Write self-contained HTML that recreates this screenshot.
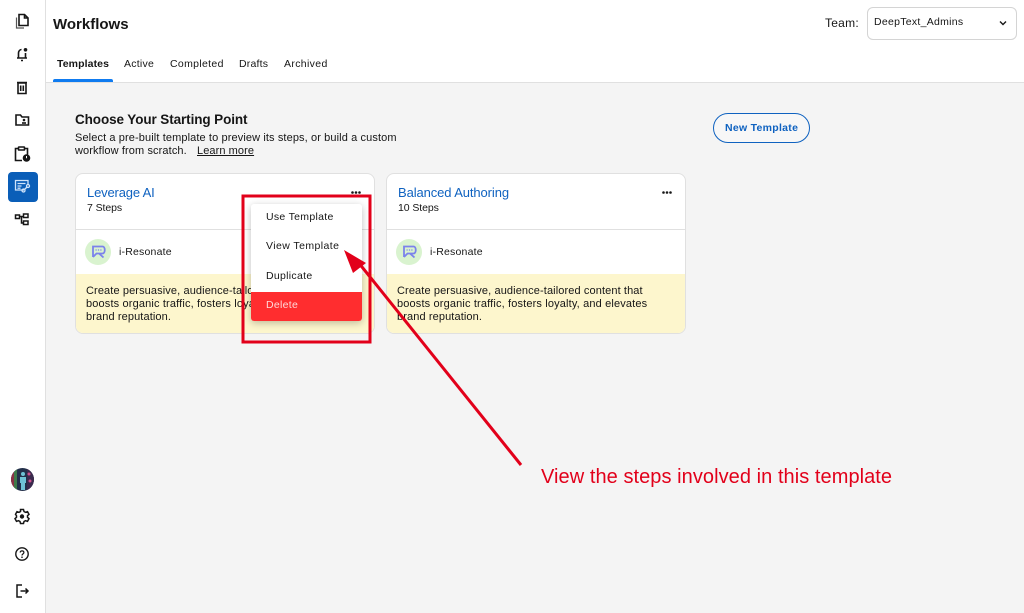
<!DOCTYPE html>
<html lang="en"><head><meta charset="utf-8"><title>Workflows</title>
<style>
html,body{margin:0;padding:0}
body{width:1024px;height:613px;position:relative;overflow:hidden;background:#f4f4f4;font-family:"Liberation Sans",sans-serif;color:#161616}
.a{position:absolute;white-space:nowrap}
.t{font-size:11px;line-height:13px;letter-spacing:.11px}
.ic{position:absolute;left:12px;width:20px;height:20px;fill:none;stroke:#161616;stroke-width:1.6}
.card{position:absolute;top:173px;width:298px;height:159px;background:#fff;border:1px solid #e0e0e0;border-radius:8px;overflow:hidden}
.card .ttl{left:11px;top:11px;font-size:13px;line-height:15px;color:#0f62c0;letter-spacing:-.1px}
.card .st{left:11px;top:27.500px;font-size:10.5px;line-height:12px;letter-spacing:-.08px}
.card .dv{position:absolute;left:0;right:0;top:55px;height:1px;background:#e0e0e0}
.card .y{position:absolute;left:0;right:0;top:100px;height:60px;background:#fdf6cd}
.card .d{left:10px;top:111px;font-size:11px;line-height:13px;letter-spacing:.11px;color:#161616}
.card .d span{letter-spacing:.15px}
.card .name{left:43px;top:72px;font-size:10.5px;line-height:13px;letter-spacing:.2px}
.card .av{position:absolute;left:9px;top:65px;width:26px;height:26px}
.dots{position:absolute;top:191px;width:10px;height:3px}
.m{left:15px;font-size:10.5px;line-height:13px;letter-spacing:.3px}
</style></head><body>

<div class="a" style="left:0;top:0;width:45px;height:613px;background:#fff;border-right:1px solid #e0e0e0"></div>
<div class="a" style="left:46px;top:0;width:978px;height:82px;background:#fff;border-bottom:1px solid #e0e0e0"></div>

<svg class="ic" style="top:11px" viewBox="0 0 20 20"><path d="M7 3.500h5.500L16 7v7.500H7z"/><path d="M12.500 3.500V7H16"/><path d="M4.500 6.500v10.500H12" stroke="#555" stroke-width="1.200"/></svg>
<svg class="ic" style="top:44px" viewBox="0 0 20 20"><path d="M5 14h10M6.500 14V9c0-2 1.500-3.500 3-3.500M13.500 9v5M9 16.500h2"/><circle cx="13.500" cy="5.800" r="1.800" fill="#161616" stroke="none"/></svg>
<svg class="ic" style="top:78px" viewBox="0 0 20 20"><path d="M6 5h8v10.500H6zM5 4.500h10"/><path d="M8.700 7.500v5.500M11.300 7.500v5.500"/></svg>
<svg class="ic" style="top:110px" viewBox="0 0 20 20"><path d="M4 5h4.500l1.500 2h6.500v8H4z"/><circle cx="12" cy="10" r="1.300" fill="#161616" stroke="none"/><path d="M10 13h4"/></svg>
<svg class="ic" style="top:144px" viewBox="0 0 20 20"><path d="M13 4.500h2.500v6M10 16.500H3.500v-12H6"/><rect x="6.500" y="3" width="6" height="3" rx=".5"/><circle cx="14.500" cy="14" r="3.800" fill="#161616" stroke="none"/><path d="M14.500 12v2.200" stroke="#fff" stroke-width="1"/></svg>

<div class="a" style="left:8px;top:172px;width:30px;height:30px;background:#0a5eb8;border-radius:4px"></div>
<svg class="ic" style="top:176px;stroke:#cfe3fa;stroke-width:1.300" viewBox="0 0 20 20"><path d="M12 14H3.500V4.500h12.500V8"/><path d="M5.500 7.500h8M5.500 10h4M5.500 12.200h3"/><circle cx="11.500" cy="14.500" r="1.500"/><circle cx="16" cy="10" r="1.500"/><path d="M12.500 13.500l2.500-2.500"/></svg>
<svg class="ic" style="top:209px;stroke-width:1.500" viewBox="0 0 20 20"><rect x="3.500" y="6" width="4" height="3.500"/><rect x="11.500" y="5" width="4.500" height="3.500"/><rect x="11.500" y="12" width="4.500" height="3.500"/><path d="M7.500 7.500h4M9.500 7.500v6.500h2"/></svg>

<svg class="a" style="left:11px;top:468px" width="23" height="23" viewBox="0 0 23 23"><defs><clipPath id="c"><circle cx="11.500" cy="11.500" r="11.500"/></clipPath></defs><g clip-path="url(#c)"><rect width="23" height="23" fill="#23304a"/><rect x="0" width="3" height="23" fill="#8a3346"/><rect x="3" width="3" height="23" fill="#3f7a4a"/><rect x="16" width="7" height="23" fill="#3b2a4e"/><circle cx="12" cy="6" r="2" fill="#6fc3d6"/><path d="M9 9h6v6h-1v7h-4v-7H9z" fill="#6fc3d6"/><circle cx="18" cy="6" r="1.500" fill="#d0508c"/><circle cx="19" cy="13" r="1.500" fill="#d0508c"/></g></svg>
<svg class="ic" style="top:506px;stroke-width:1.500" viewBox="0 0 20 20"><path d="M8.500 3.500h3l.5 2 1.500.8 2-.6 1.500 2.600-1.500 1.400v1.600l1.500 1.400-1.500 2.600-2-.6-1.500.8-.5 2h-3l-.5-2-1.500-.8-2 .6-1.500-2.600 1.500-1.400V9.700L3.500 8.300 5 5.700l2 .6L8.500 5.500z"/><circle cx="10" cy="10.500" r="2.200" fill="#161616" stroke="none"/></svg>
<svg class="ic" style="top:544px;stroke-width:1.400" viewBox="0 0 20 20"><circle cx="10" cy="10" r="6.200"/><path d="M8.200 8.500c0-2.200 3.700-2.200 3.700 0 0 1.400-1.900 1.400-1.900 3" stroke-width="1.200"/><circle cx="10" cy="13.200" r=".8" fill="#161616" stroke="none"/></svg>
<svg class="ic" style="top:581px;stroke-width:1.500" viewBox="0 0 20 20"><path d="M10 4H5v12h5M8.500 10H16M13.500 7.500L16 10l-2.500 2.500"/></svg>

<div class="a" style="left:53px;top:16px;font-size:15px;line-height:18px;font-weight:bold;letter-spacing:0">Workflows</div>
<div class="a t" style="left:57px;top:58px;font-weight:bold;font-size:10.500px;letter-spacing:.1px">Templates</div>
<div class="a t" style="left:124px;top:58px;font-size:10.500px;letter-spacing:.25px">Active</div>
<div class="a t" style="left:170px;top:58px;font-size:10.500px;letter-spacing:.33px">Completed</div>
<div class="a t" style="left:239px;top:58px;font-size:10.500px;letter-spacing:.2px">Drafts</div>
<div class="a t" style="left:284px;top:58px;font-size:10.500px;letter-spacing:.35px">Archived</div>
<div class="a" style="left:53px;top:79px;width:60px;height:3px;background:#0f7bf0;border-radius:2px 2px 0 0"></div>

<div class="a" style="left:825px;top:15px;font-size:12px;line-height:16px;letter-spacing:.25px">Team:</div>
<div class="a" style="left:867px;top:7px;width:148px;height:31px;background:#fff;border:1px solid #d4d4d4;border-radius:6px"></div>
<div class="a" style="left:874px;top:16px;font-size:10.500px;line-height:13px;letter-spacing:.28px">DeepText_Admins</div>
<svg class="a" style="left:998px;top:18px" width="10" height="10" viewBox="0 0 10 10"><path d="M2 3.500L5 6.500 8 3.500" fill="none" stroke="#161616" stroke-width="1.400"/></svg>

<div class="a" style="left:75px;top:111px;font-size:13.500px;line-height:18px;font-weight:bold;letter-spacing:-.1px">Choose Your Starting Point</div>
<div class="a t" style="left:75px;top:132px">Select a pre-built template to preview its steps, or build a custom</div>
<div class="a t" style="left:75px;top:145px">workflow from scratch.</div>
<div class="a t" style="left:197px;top:145px;text-decoration:underline;letter-spacing:.08px">Learn more</div>

<div class="a" style="left:713px;top:113px;width:95px;height:28px;border:1px solid #0f62c0;border-radius:15px;background:#f7f7f7"></div>
<div class="a" style="left:725px;top:122px;font-size:10.500px;line-height:13px;font-weight:bold;color:#0f62c0;letter-spacing:.28px">New Template</div>

<div class="card" style="left:75px">
<div class="a ttl" style="letter-spacing:-.16px">Leverage AI</div><div class="a st">7 Steps</div><div class="dv"></div>
<svg class="av" viewBox="0 0 26 26"><circle cx="13" cy="13" r="13" fill="#d9f3cf"/><path d="M8 18V7.500h9.500c3 0 3 7 0 7H11.500L8 18M14 14.500l4.500 4" fill="none" stroke="#7b83eb" stroke-width="1.800"/><path d="M10.500 11h6" stroke="#7b83eb" stroke-width="1.200" stroke-dasharray="1.200 1.200"/></svg>
<div class="a name">i-Resonate</div><div class="y"></div>
<div class="a d">Create persuasive, audience-tailored content that<br><span>boosts organic traffic, fosters loyalty, and elevates</span><br>brand reputation.</div>
</div>
<svg class="dots" style="left:351px" viewBox="0 0 10 3"><circle cx="1.500" cy="1.500" r="1.300" fill="#161616"/><circle cx="5" cy="1.500" r="1.300" fill="#161616"/><circle cx="8.500" cy="1.500" r="1.300" fill="#161616"/></svg>

<div class="card" style="left:386px">
<div class="a ttl">Balanced Authoring</div><div class="a st">10 Steps</div><div class="dv"></div>
<svg class="av" viewBox="0 0 26 26"><circle cx="13" cy="13" r="13" fill="#d9f3cf"/><path d="M8 18V7.500h9.500c3 0 3 7 0 7H11.500L8 18M14 14.500l4.500 4" fill="none" stroke="#7b83eb" stroke-width="1.800"/><path d="M10.500 11h6" stroke="#7b83eb" stroke-width="1.200" stroke-dasharray="1.200 1.200"/></svg>
<div class="a name">i-Resonate</div><div class="y"></div>
<div class="a d">Create persuasive, audience-tailored content that<br><span>boosts organic traffic, fosters loyalty, and elevates</span><br>brand reputation.</div>
</div>
<svg class="dots" style="left:662px" viewBox="0 0 10 3"><circle cx="1.500" cy="1.500" r="1.300" fill="#161616"/><circle cx="5" cy="1.500" r="1.300" fill="#161616"/><circle cx="8.500" cy="1.500" r="1.300" fill="#161616"/></svg>

<div class="a" style="left:251px;top:204px;width:111px;height:117px;background:#fff;border-radius:3px;box-shadow:0 2px 8px rgba(0,0,0,.25);overflow:hidden">
<div class="a m" style="top:7px">Use Template</div>
<div class="a m" style="top:36px;letter-spacing:.42px">View Template</div>
<div class="a m" style="top:66px">Duplicate</div>
<div class="a" style="left:0;top:88px;width:111px;height:29px;background:#ff2d2f"></div>
<div class="a m" style="top:95px;color:#ffd9d9">Delete</div>
</div>

<svg class="a" style="left:0;top:0" width="1024" height="613" viewBox="0 0 1024 613">
<rect x="243" y="196" width="127" height="146" fill="none" stroke="#e2001a" stroke-width="3"/>
<path d="M521 465L358 262" stroke="#e2001a" stroke-width="3" fill="none"/>
<path d="M344 250L366 263L353 273z" fill="#e2001a"/>
</svg>

<div class="a" style="left:541px;top:465px;font-size:20px;line-height:24px;color:#e2001a;letter-spacing:.06px">View the steps involved in this template</div>
</body></html>
